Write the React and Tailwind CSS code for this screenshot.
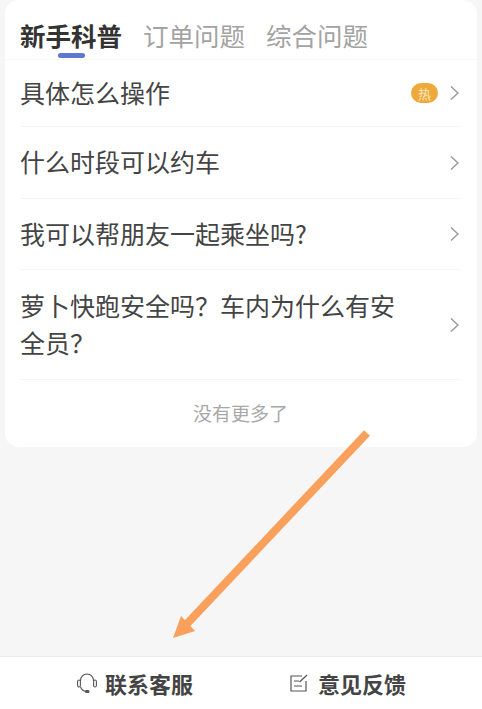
const FONT = { fontFamily: '"Noto Sans CJK SC", "Noto Sans", sans-serif' };

const rows = [
  { title: '具体怎么操作', hot: true, h: 'h-[67px]' },
  { title: '什么时段可以约车', h: 'h-[72px]' },
  { title: '我可以帮朋友一起乘坐吗?', h: 'h-[71px]' },
  { title: '萝卜快跑安全吗\uFF1F车内为什么有安全员\uFF1F', h: 'h-[110px]' },
];

function Chevron() {
  return (
    <svg width="9" height="16" viewBox="0 0 9 16" fill="none" stroke="#9a9a9a" strokeWidth="1.5" className="shrink-0">
      <path d="M1 1.500 8 8l-7 6.500" />
    </svg>
  );
}

function Row({ title, hot, h }) {
  return (
    <div className={`${h} flex items-center justify-between border-b border-[#f5f5f5] pr-[2px]`}>
      <span className="w-[380px] pb-[2px] text-[25px] leading-[37px] text-[#444444]">{title}</span>
      <div className="flex items-center gap-[12px]">
        {hot ? (
          <span className="flex h-[20px] w-[27px] items-center justify-center rounded-full bg-[#edaa3a] text-[13px] leading-none text-[#fbe6bd]">
            热
          </span>
        ) : null}
        <Chevron />
      </div>
    </div>
  );
}

export default function App() {
  return (
    <div className="relative flex h-[709px] w-[482px] flex-col overflow-hidden bg-[#f6f6f6]" style={FONT}>
      <div className="mx-[5px] h-[447px] rounded-[14px] bg-white">
        <div className="flex h-[60px] gap-[21px] border-b border-[#f7f7f7] pl-[15px]">
          <div className="relative pt-[16px] text-[25.5px] leading-[37px] font-bold text-[#333333]">
            新手科普
            <span className="absolute bottom-[1px] left-[38px] h-[5px] w-[27px] rounded-full bg-[#5c78d0]" />
          </div>
          <div className="pt-[16px] text-[25.5px] leading-[37px] text-[#a3a3a3]">订单问题</div>
          <div className="pt-[16px] text-[25.5px] leading-[37px] text-[#a3a3a3]">综合问题</div>
        </div>
        <div className="mr-[16px] ml-[15px]">
          {rows.map((r) => (
            <Row key={r.title} {...r} />
          ))}
          <div className="pt-[19px] text-center text-[19px] leading-[28px] text-[#a8a8a8]">没有更多了</div>
        </div>
      </div>

      {/* annotation arrow drawn over the screenshot */}
      <svg className="absolute top-0 left-0" width="482" height="709" viewBox="0 0 482 709" fill="none">
        <path d="M367 433 183 628" stroke="#f9a05c" strokeWidth="8" />
        <path d="M173 638 181 616 195 631Z" fill="#f9a05c" />
      </svg>

      <div className="mt-auto flex h-[53px] items-center border-t border-[#ececec] bg-white">
        <div className="flex w-[269px] items-center justify-end gap-[8px] pr-[76px]">
          <svg width="20" height="20" viewBox="0 0 20 20" fill="none" stroke="#555555" strokeWidth="1.1">
            <path d="M3.500 8V7.500a6.500 6.500 0 0 1 13 0V8" />
            <rect x="0.600" y="7" width="2.800" height="7" rx="1.400" />
            <rect x="16.600" y="7" width="2.800" height="7" rx="1.400" />
            <path d="M3.500 14c1 2.500 3 4 5.500 4.500" />
            <rect x="8.500" y="17.500" width="3.500" height="2" rx="1" fill="#555555" />
          </svg>
          <span className="text-[22px] leading-none font-bold text-[#444444]">联系客服</span>
        </div>
        <div className="flex items-center gap-[10px] pl-[21px]">
          <svg width="18" height="18" viewBox="0 0 18 18" fill="none" stroke="#555555" strokeWidth="1.2">
            <path d="M12 2H1v15h15V7" />
            <path d="M4 7h5M4 12h8" />
            <path d="M9.500 8 17 1" />
          </svg>
          <span className="text-[22px] leading-none font-bold text-[#444444]">意见反馈</span>
        </div>
      </div>
    </div>
  );
}
